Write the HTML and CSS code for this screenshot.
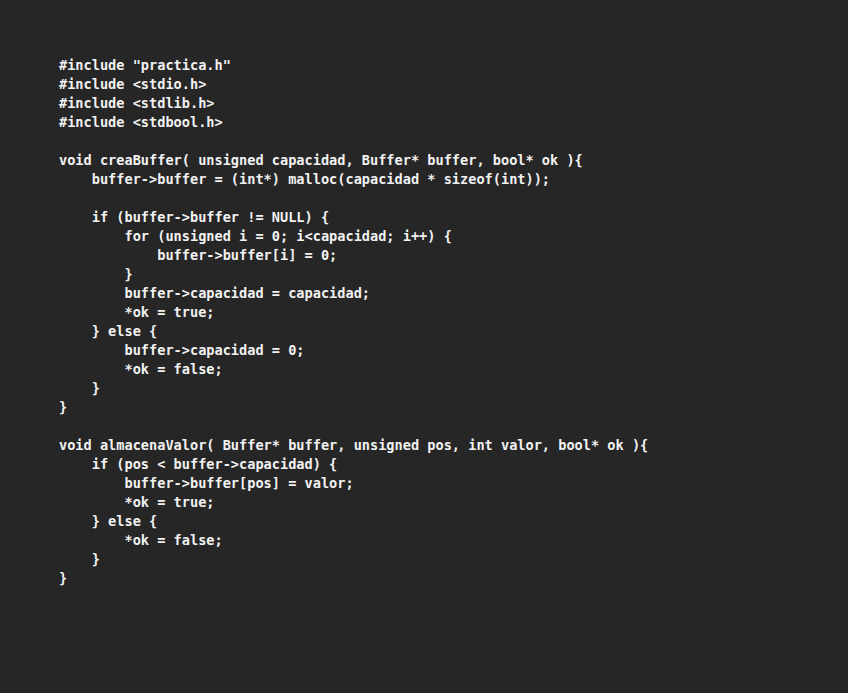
FILE: index.html
```html
<!DOCTYPE html>
<html lang="es">
<head>
<meta charset="utf-8">
<title>practica.c</title>
<link rel="stylesheet" href="styles.css">
</head>
<body>
<main class="editor">
<pre class="code">#include "practica.h"
#include &lt;stdio.h&gt;
#include &lt;stdlib.h&gt;
#include &lt;stdbool.h&gt;

void creaBuffer( unsigned capacidad, Buffer* buffer, bool* ok ){
    buffer-&gt;buffer = (int*) malloc(capacidad * sizeof(int));

    if (buffer-&gt;buffer != NULL) {
        for (unsigned i = 0; i&lt;capacidad; i++) {
            buffer-&gt;buffer[i] = 0;
        }
        buffer-&gt;capacidad = capacidad;
        *ok = true;
    } else {
        buffer-&gt;capacidad = 0;
        *ok = false;
    }
}

void almacenaValor( Buffer* buffer, unsigned pos, int valor, bool* ok ){
    if (pos &lt; buffer-&gt;capacidad) {
        buffer-&gt;buffer[pos] = valor;
        *ok = true;
    } else {
        *ok = false;
    }
}</pre>
</main>
</body>
</html>
```
FILE: styles.css
```css
html, body {
  margin: 0;
  padding: 0;
  background: #262626;
}
.editor {
  width: 848px;
  height: 693px;
  box-sizing: border-box;
  padding: 56px 0 0 59px;
  background: #262626;
}
.code {
  margin: 0;
  font-family: "DejaVu Sans Mono", "Liberation Mono", monospace;
  font-size: 13.6px;
  line-height: 19px;
  font-weight: bold;
  color: #f2f2f2;
  white-space: pre;
}
```
